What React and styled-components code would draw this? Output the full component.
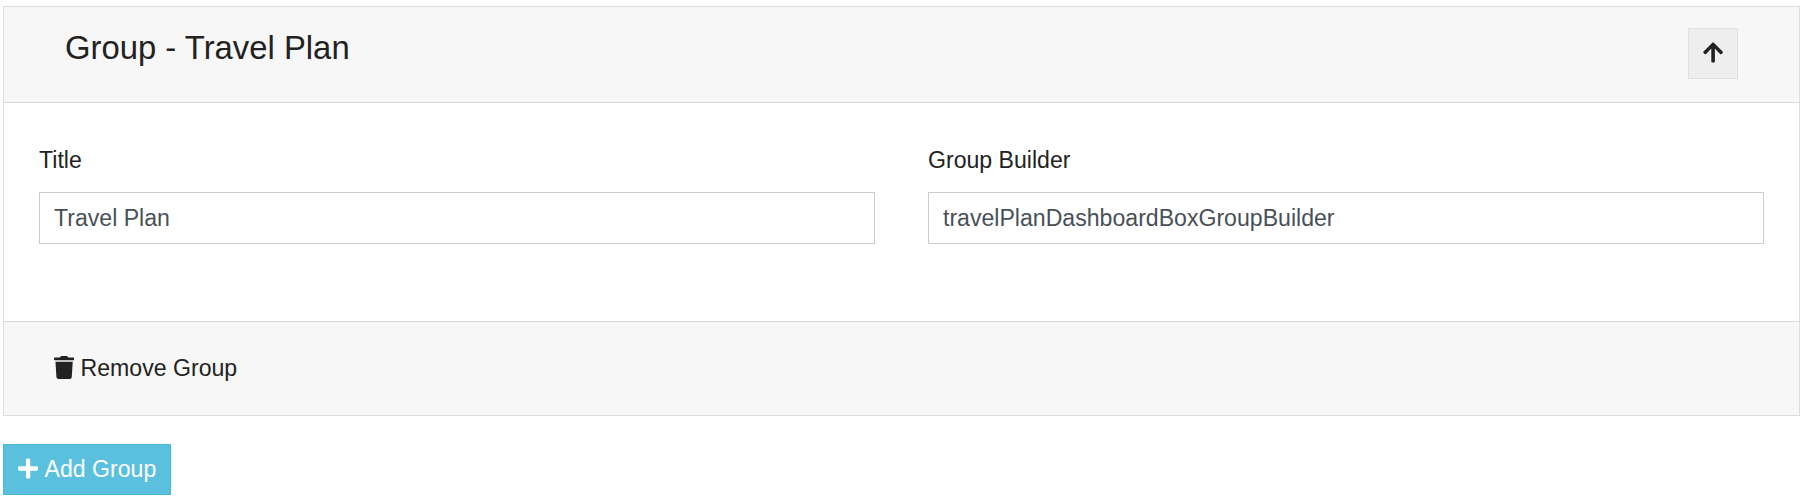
import React from "react";
import styled, { createGlobalStyle, css } from "styled-components";
import { FaArrowUp, FaTrash, FaPlus } from "react-icons/fa";

const GlobalStyle = createGlobalStyle`
  *, *::before, *::after { box-sizing: border-box; }
  body {
    margin: 0;
    background: #fff;
    color: #222;
    font: 23.1px/34px "Liberation Sans", Arial, sans-serif;
  }
`;

const Page = styled.main`
  padding: 6px 4px 0 3px;
`;

const Card = styled.section`
  border: 1px solid #dedede;
`;

const CardHeader = styled.header`
  display: flex;
  justify-content: space-between;
  align-items: flex-start;
  height: 96px;
  padding: 21px 61px 0 61px;
  background: #f7f7f7;
  border-bottom: 1px solid #d8d8d8;
`;

const CardTitle = styled.h3`
  margin: 0;
  font-size: 32.83px;
  font-weight: 400;
  line-height: 40px;
`;

const Button = styled.button`
  display: inline-flex;
  align-items: center;
  height: 51px;
  padding: 0 14px 1px;
  border: 1px solid;
  font: inherit;
  cursor: pointer;
`;

const IconButton = styled(Button)`
  justify-content: center;
  width: 50px;
  padding: 0 0 1px;
  color: #222;
  background: #eee;
  border-color: #e1e1e1;
`;

const AddButton = styled(Button)`
  gap: 6.4px;
  width: 168px;
  margin-top: 28px;
  color: #fff;
  background: #5bc0de;
  border-color: #46b8da;
  white-space: nowrap;
`;

const LinkButton = styled(Button)`
  gap: 6.4px;
  color: #222;
  background: transparent;
  border-color: transparent;
`;

const Fields = styled.div`
  display: grid;
  grid-template-columns: 1fr 1fr;
  gap: 53px;
  height: 218px;
  padding: 40px 35px 0;
`;

const Field = styled.label`
  display: flex;
  flex-direction: column;
  gap: 15px;
`;

const Input = styled.input`
  width: 100%;
  height: 52px;
  padding: 0 14px;
  border: 1px solid #ccc;
  border-radius: 0;
  color: #495057;
  background: #fff;
  font: inherit;
  outline: none;
`;

const CardFooter = styled.footer`
  display: flex;
  align-items: center;
  height: 94px;
  padding: 0 35px;
  background: #f7f7f7;
  border-top: 1px solid #d8d8d8;
`;

const iconSize = css`
  flex: none;
  width: 20.2px;
  height: 23px;
  margin-bottom: 1px;
`;

const PlusIcon = styled(FaPlus)`
  ${iconSize}
`;

const TrashIcon = styled(FaTrash)`
  ${iconSize}
`;

const ArrowIcon = styled(FaArrowUp)`
  ${iconSize}
`;

export default function App() {
  return (
    <Page>
      <GlobalStyle />
      <Card>
        <CardHeader>
          <CardTitle>Group - Travel Plan</CardTitle>
          <IconButton type="button" aria-label="Move up">
            <ArrowIcon />
          </IconButton>
        </CardHeader>
        <Fields>
          <Field>
            Title
            <Input defaultValue="Travel Plan" />
          </Field>
          <Field>
            Group Builder
            <Input defaultValue="travelPlanDashboardBoxGroupBuilder" spellCheck={false} />
          </Field>
        </Fields>
        <CardFooter>
          <LinkButton type="button">
            <TrashIcon />
            Remove Group
          </LinkButton>
        </CardFooter>
      </Card>
      <AddButton type="button">
        <PlusIcon />
        Add Group
      </AddButton>
    </Page>
  );
}
